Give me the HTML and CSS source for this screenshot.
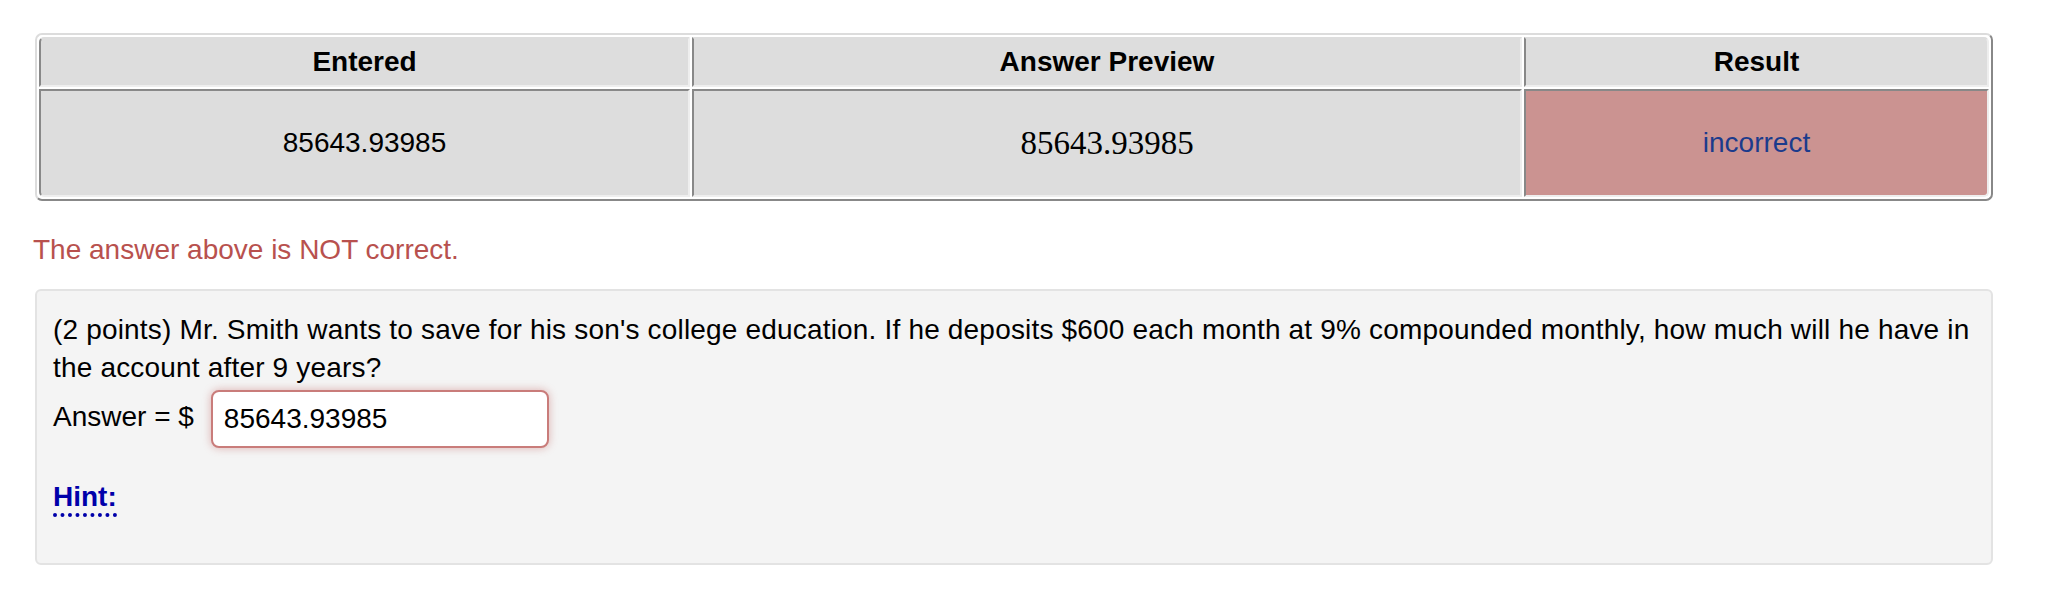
FILE: index.html
```html
<!DOCTYPE html>
<html lang="en">
<head>
<meta charset="utf-8">
<title>Attempt results</title>
<link rel="stylesheet" href="styles.css">
</head>
<body>
<div class="page">
  <table class="attempt">
    <tr>
      <th class="c1">Entered</th>
      <th class="c2">Answer Preview</th>
      <th class="c3">Result</th>
    </tr>
    <tr>
      <td class="c1">85643.93985</td>
      <td class="c2 preview">85643.93985</td>
      <td class="c3 bad">incorrect</td>
    </tr>
  </table>
  <div class="feedback">The answer above is NOT correct.</div>
  <div class="problem">
    <p class="question">(2 points) Mr. Smith wants to save for his son's college education. If he deposits $600 each month at 9% compounded monthly, how much will he have in the account after 9 years?</p>
    <div class="answer">
      <span class="label">Answer = $</span>
      <span class="ans-box">85643.93985</span>
    </div>
    <div class="hint-row"><a class="hint">Hint:</a></div>
  </div>
</div>
</body>
</html>
```
FILE: styles.css
```css
html, body {
  margin: 0;
  padding: 0;
  background: #ffffff;
}
body {
  font-family: "Liberation Sans", Arial, Helvetica, sans-serif;
  font-size: 28px;
  line-height: 38px;
  color: #000;
}
.page {
  padding: 33px 77px 0 35px;
}
.attempt {
  width: 100%;
  border-collapse: separate;
  border-spacing: 2px;
  border-style: solid;
  border-width: 2px;
  border-color: #dcdcdc #888888 #888888 #dcdcdc;
  border-radius: 7px;
  table-layout: fixed;
}
.attempt th, .attempt td {
  box-sizing: border-box;
  background: #dddddd;
  text-align: center;
  vertical-align: middle;
  padding: 0;
  border-style: solid;
  border-width: 2px;
  border-color: #888888 #eeeeee #eeeeee #888888;
  line-height: normal;
}
.attempt th {
  height: 50px;
  font-weight: bold;
  border-top-color: #dddddd;
}
.attempt td {
  height: 108px;
}
.attempt .c1 { width: 651px; }
.attempt .c2 { width: 830px; }
.attempt th.c1 { border-top-left-radius: 5px; }
.attempt th.c3 { border-top-right-radius: 5px; }
.attempt td.c1 { border-bottom-left-radius: 5px; }
.attempt td.c3 { border-bottom-right-radius: 5px; }
.preview {
  font-family: "Liberation Serif", "Times New Roman", serif;
  font-size: 33px;
}
.attempt td.bad {
  background: #cb9391;
  color: #1b3b8c;
}
.feedback {
  margin: 30px 0 0 -2px;
  color: #b8514e;
}
.problem {
  margin-top: 20px;
  background: #f4f4f4;
  border: 2px solid #e3e3e3;
  border-radius: 6px;
  padding: 20px 16px 47px 16px;
}
.question {
  margin: 0;
  letter-spacing: 0.18px;
}
.answer {
  margin-top: 3px;
  display: flex;
  align-items: center;
}
.label {
  padding-bottom: 5px;
}
.ans-box {
  box-sizing: border-box;
  margin-left: 17px;
  width: 338px;
  height: 58px;
  padding: 0 11px;
  background: #ffffff;
  border: 2px solid #c97c7a;
  border-radius: 8px;
  box-shadow: 0 0 9px rgba(185, 74, 72, 0.4);
  display: flex;
  align-items: center;
}
.hint-row {
  margin-top: 30px;
}
.hint {
  font-weight: bold;
  color: #0000aa;
  padding-bottom: 1px;
  border-bottom: 4px dotted #0000aa;
  cursor: pointer;
}
```
